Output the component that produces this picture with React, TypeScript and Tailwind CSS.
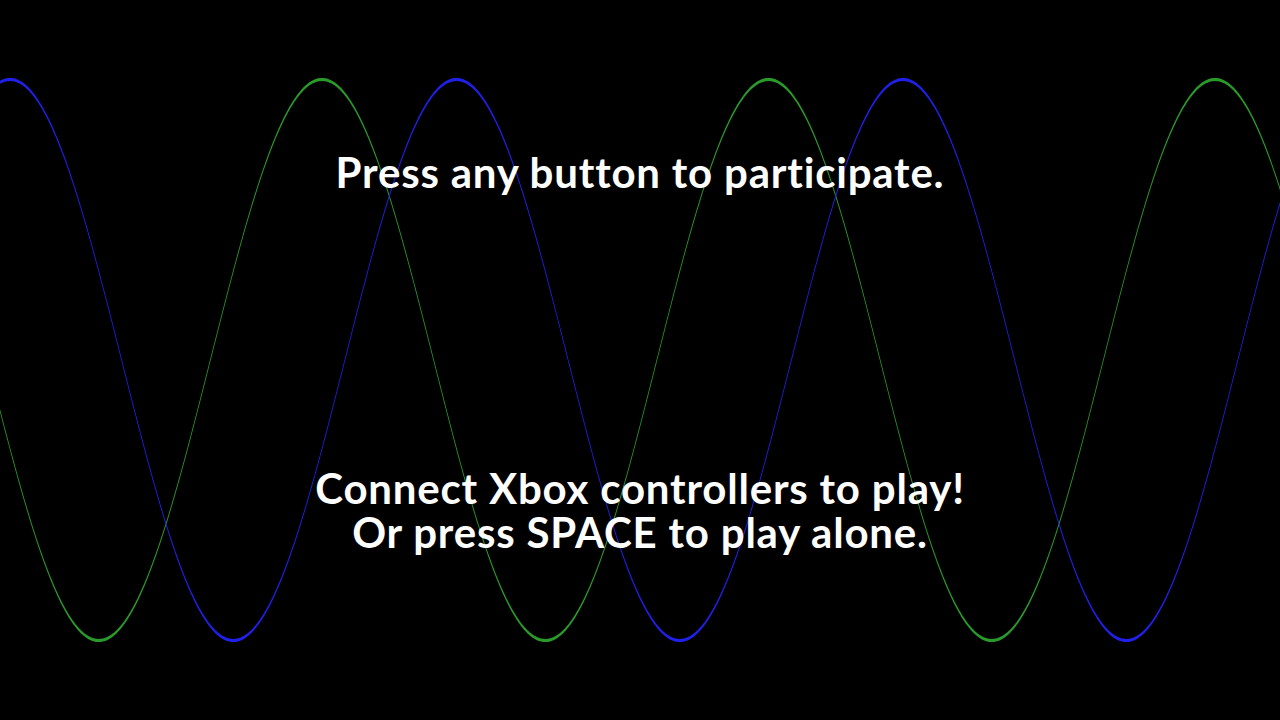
import React from "react";

const W = 1280;
const PERIOD = 446.5;
const CENTER = 360;
const AMP = 280.5;
const THICK = 1.6;

// band of constant vertical thickness, like a curve plotted column by column
function bandPath(x0: number) {
  const top: string[] = [];
  const bottom: string[] = [];
  for (let x = -2; x <= W + 2; x += 1) {
    const y = CENTER - AMP * Math.cos((2 * Math.PI * (x - x0)) / PERIOD);
    top.push(`${x},${(y - THICK).toFixed(2)}`);
    bottom.unshift(`${x},${(y + THICK).toFixed(2)}`);
  }
  return `M${top.join(" L")} L${bottom.join(" L")} Z`;
}

const blue = bandPath(10);
const green = bandPath(322);

export default function App() {
  return (
    <div className="relative h-[720px] w-[1280px] overflow-hidden bg-black">
      {/* background waves */}
      <svg className="absolute inset-0" width={1280} height={720} viewBox="0 0 1280 720">
        <path d={green} fill="#2a9a2a" />
        <path d={blue} fill="#2020e8" />
      </svg>

      <div
        className="relative flex flex-col items-center text-center text-[42px] leading-[44px] tracking-[0.8px] font-bold text-white"
        style={{ fontFamily: "Lato, 'DejaVu Sans', sans-serif" }}
      >
        <p className="pt-[150px]">Press any button to participate.</p>
        <div className="mt-[272px]">
          <p>Connect Xbox controllers to play!</p>
          <p>Or press SPACE to play alone.</p>
        </div>
      </div>
    </div>
  );
}
